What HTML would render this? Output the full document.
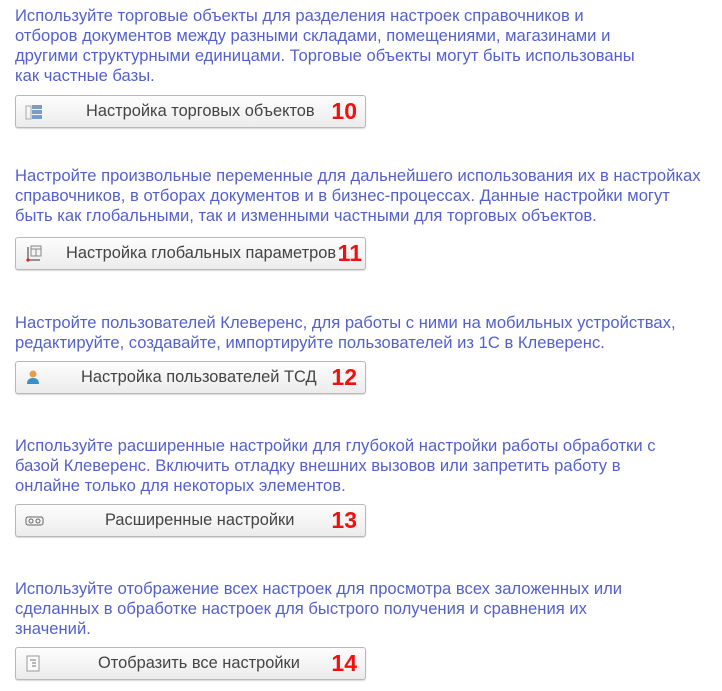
<!DOCTYPE html>
<html><head><meta charset="utf-8"><style>
body{margin:0;width:722px;height:691px;background:#fff;font-family:"Liberation Sans",Arial,sans-serif;position:relative;overflow:hidden}
.p{position:absolute;left:15px;width:705px;color:#5461cc;font-size:16.6px;line-height:20px;white-space:nowrap}
.b{position:absolute;left:15px;width:349px;height:31px;border:1px solid #b8b8b8;border-radius:3px;background:linear-gradient(#fdfdfd,#ececec);box-shadow:0 1px 1px rgba(0,0,0,.15)}
.b .t{position:absolute;top:0;line-height:31px;font-size:16.4px;color:#444;white-space:nowrap}
.b .n{position:absolute;right:8px;top:0;line-height:31px;font-size:23px;font-weight:bold;color:#f01010}
.b svg{position:absolute;left:9px;top:7px}
</style></head><body>
<div class="p" style="top:6px">Используйте торговые объекты для разделения настроек справочников и<br>отборов документов между разными складами, помещениями, магазинами и<br>другими структурными единицами. Торговые объекты могут быть использованы<br>как частные базы.</div>
<div class="b" style="top:95px"><svg width="18" height="18"><rect x="1" y="3" width="5" height="13" fill="none" stroke="#aaa"/><rect x="7" y="2" width="10" height="4" fill="#7a9cc6"/><rect x="7" y="7" width="10" height="4" fill="#7a9cc6"/><rect x="7" y="12" width="10" height="4" fill="#7a9cc6"/></svg><span class="t" style="left:70px">Настройка торговых объектов</span><span class="n">10</span></div>

<div class="p" style="top:166px">Настройте произвольные переменные для дальнейшего использования их в настройках<br>справочников, в отборах документов и в бизнес-процессах. Данные настройки могут<br>быть как глобальными, так и изменными частными для торговых объектов.</div>
<div class="b" style="top:237px"><svg width="18" height="18"><line x1="3" y1="2" x2="3" y2="15" stroke="#333"/><line x1="3" y1="15" x2="15" y2="15" stroke="#333"/><circle cx="3" cy="15" r="1.6" fill="#e02020"/><rect x="6" y="1" width="10" height="10" fill="#f4f4f4" stroke="#888"/><line x1="6" y1="4" x2="16" y2="4" stroke="#888"/><line x1="11" y1="4" x2="11" y2="11" stroke="#888"/></svg><span class="t" style="left:50px">Настройка глобальных параметров</span><span class="n" style="right:3px">11</span></div>

<div class="p" style="top:313px">Настройте пользователей Клеверенс, для работы с ними на мобильных устройствах,<br>редактируйте, создавайте, импортируйте пользователей из 1С в Клеверенс.</div>
<div class="b" style="top:361px"><svg width="18" height="18"><circle cx="8" cy="5" r="3.5" fill="#e0a050"/><path d="M2 15 Q2 9 8 9 Q14 9 14 15Z" fill="#3a8fc8"/></svg><span class="t" style="left:65px">Настройка пользователей ТСД</span><span class="n">12</span></div>

<div class="p" style="top:436px">Используйте расширенные настройки для глубокой настройки работы обработки с<br>базой Клеверенс. Включить отладку внешних вызовов или запретить работу в<br>онлайне только для некоторых элементов.</div>
<div class="b" style="top:504px"><svg width="20" height="18"><rect x="1" y="5" width="17" height="8" rx="2" fill="none" stroke="#666"/><circle cx="6" cy="9" r="2" fill="none" stroke="#666"/><circle cx="13" cy="9" r="2" fill="none" stroke="#666"/></svg><span class="t" style="left:89px">Расширенные настройки</span><span class="n">13</span></div>

<div class="p" style="top:579px">Используйте отображение всех настроек для просмотра всех заложенных или<br>сделанных в обработке настроек для быстрого получения и сравнения их<br>значений.</div>
<div class="b" style="top:647px"><svg width="18" height="18"><rect x="2" y="1" width="12" height="15" fill="#fafafa" stroke="#999"/><line x1="5" y1="5" x2="11" y2="5" stroke="#777"/><line x1="7" y1="8" x2="11" y2="8" stroke="#777"/><line x1="7" y1="11" x2="11" y2="11" stroke="#777"/></svg><span class="t" style="left:82px">Отобразить все настройки</span><span class="n">14</span></div>
</body></html>
